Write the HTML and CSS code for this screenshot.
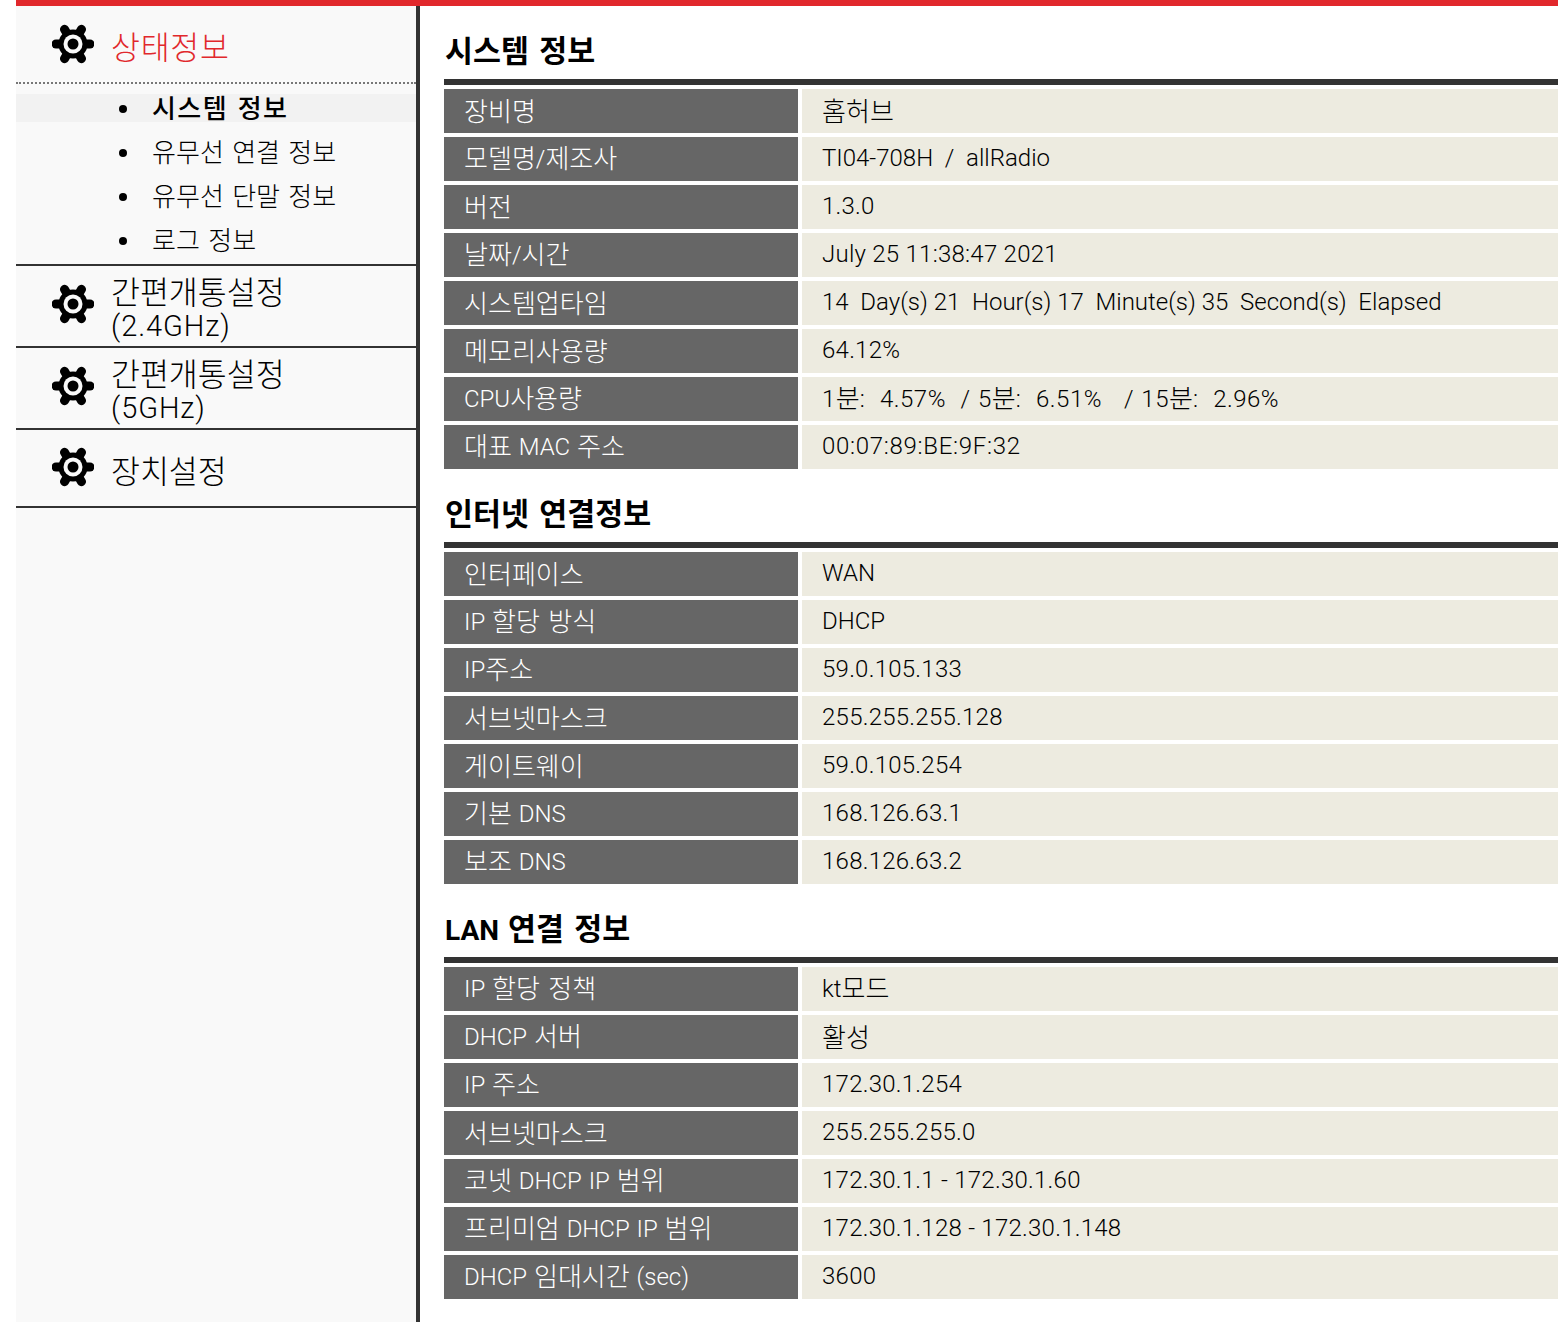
FILE: index.html
```html
<!DOCTYPE html>
<html lang="ko">
<head>
  <meta charset="UTF-8">
  <meta name="viewport" content="width=device-width, initial-scale=1.0">
  <title>상태정보</title>
  <link rel="stylesheet" href="styles.css">
</head>
<body>
<svg class="defs" width="0" height="0">
  <symbol id="gear" viewBox="-21 -21 42 42">
    <g stroke="#000" stroke-width="9" stroke-linecap="round">
      <line x1="0" y1="0" x2="17" y2="0"/>
      <line x1="0" y1="0" x2="-17" y2="0"/>
      <line x1="0" y1="0" x2="8.5" y2="14.7"/>
      <line x1="0" y1="0" x2="-8.5" y2="14.7"/>
      <line x1="0" y1="0" x2="8.5" y2="-14.7"/>
      <line x1="0" y1="0" x2="-8.5" y2="-14.7"/>
    </g>
    <circle r="14.5" fill="#000"/>
    <circle r="9.5" fill="#f9f9f9"/>
    <circle r="5.5" fill="#000"/>
  </symbol>
</svg>
<div class="topbar"></div>
<div class="page">
  <nav class="sidebar">
    <div class="menu menu-open">
      <svg class="gear"><use href="#gear"/></svg>
      <span class="menu-title"><span class="ko">상태정보</span></span>
    </div>
    <ul class="submenu">
      <li class="active"><span class="ko">시스템 정보</span></li>
      <li><span class="ko">유무선 연결 정보</span></li>
      <li><span class="ko">유무선 단말 정보</span></li>
      <li><span class="ko">로그 정보</span></li>
    </ul>
    <div class="menu menu-two">
      <svg class="gear"><use href="#gear"/></svg>
      <span class="menu-title"><span class="ko">간편개통설정</span><br>(2.4GHz)</span>
    </div>
    <div class="menu menu-two">
      <svg class="gear"><use href="#gear"/></svg>
      <span class="menu-title"><span class="ko">간편개통설정</span><br>(5GHz)</span>
    </div>
    <div class="menu menu-last">
      <svg class="gear"><use href="#gear"/></svg>
      <span class="menu-title"><span class="ko">장치설정</span></span>
    </div>
  </nav>

  <main class="content">
    <h2><span class="ko">시스템 정보</span></h2>
    <div class="info">
      <div class="key"><span class="ko">장비명</span></div><div class="val"><span class="ko">홈허브</span></div>
      <div class="key"><span><span class="ko">모델명</span>/<span class="ko">제조사</span></span></div><div class="val">TI04-708H  /  allRadio</div>
      <div class="key"><span class="ko">버전</span></div><div class="val num">1.3.0</div>
      <div class="key"><span><span class="ko">날짜</span>/<span class="ko">시간</span></span></div><div class="val num">July 25 11:38:47 2021</div>
      <div class="key"><span class="ko">시스템업타임</span></div><div class="val">14  Day(s) 21  Hour(s) 17  Minute(s) 35  Second(s)  Elapsed</div>
      <div class="key"><span class="ko">메모리사용량</span></div><div class="val num">64.12%</div>
      <div class="key"><span>CPU<span class="ko">사용량</span></span></div><div class="val cpu"><span>1<span class="ko">분</span>:  4.57%  / 5<span class="ko">분</span>:  6.51%   / 15<span class="ko">분</span>:  2.96%</span></div>
      <div class="key"><span><span class="ko">대표</span> MAC <span class="ko">주소</span></span></div><div class="val mac">00:07:89:BE:9F:32</div>
    </div>

    <h2><span class="ko">인터넷 연결정보</span></h2>
    <div class="info">
      <div class="key"><span class="ko">인터페이스</span></div><div class="val">WAN</div>
      <div class="key"><span>IP <span class="ko">할당 방식</span></span></div><div class="val">DHCP</div>
      <div class="key"><span>IP<span class="ko">주소</span></span></div><div class="val num">59.0.105.133</div>
      <div class="key"><span class="ko">서브넷마스크</span></div><div class="val num">255.255.255.128</div>
      <div class="key"><span class="ko">게이트웨이</span></div><div class="val num">59.0.105.254</div>
      <div class="key"><span><span class="ko">기본</span> DNS</span></div><div class="val num">168.126.63.1</div>
      <div class="key"><span><span class="ko">보조</span> DNS</span></div><div class="val num">168.126.63.2</div>
    </div>

    <h2>LAN <span class="ko">연결 정보</span></h2>
    <div class="info">
      <div class="key"><span>IP <span class="ko">할당 정책</span></span></div><div class="val"><span>kt<span class="ko">모드</span></span></div>
      <div class="key"><span>DHCP <span class="ko">서버</span></span></div><div class="val"><span class="ko">활성</span></div>
      <div class="key"><span>IP <span class="ko">주소</span></span></div><div class="val num">172.30.1.254</div>
      <div class="key"><span class="ko">서브넷마스크</span></div><div class="val num">255.255.255.0</div>
      <div class="key"><span><span class="ko">코넷</span> DHCP IP <span class="ko">범위</span></span></div><div class="val num">172.30.1.1 - 172.30.1.60</div>
      <div class="key"><span><span class="ko">프리미엄</span> DHCP IP <span class="ko">범위</span></span></div><div class="val num">172.30.1.128 - 172.30.1.148</div>
      <div class="key"><span>DHCP <span class="ko">임대시간</span> (sec)</span></div><div class="val num">3600</div>
    </div>
  </main>
</div>
</body>
</html>
```
FILE: styles.css
```css
html, body {
  height: 100%;
}
body {
  margin: 0 0 0 16px;
  background-color: #fff;
  color: #000;
  font-family: Roboto, "Liberation Sans", "Noto Sans CJK KR", sans-serif;
  font-size: 24px;
  font-weight: 300;
  overflow: hidden;
}
.defs {
  display: block;
  height: 0;
}
.ko {
  font-family: "Noto Sans CJK KR", sans-serif;
  font-size: 1.085em;
  font-weight: 300;
  line-height: 1;
  letter-spacing: 0;
}
.topbar {
  height: 6px;
  background-color: #e1282c;
}
.page {
  display: flex;
  height: calc(100% - 6px);
}

/* left menu */
.sidebar {
  width: 400px;
  flex: none;
  background-color: #f9f9f9;
  border-right: 4px solid #333;
}
.menu {
  display: flex;
  align-items: center;
  gap: 17px;
  padding-left: 36px;
  height: 80px;
  border-bottom: 2px solid #333;
  font-size: 29px;
  line-height: 34px;
  letter-spacing: 0.9px;
}
.menu .ko {
  vertical-align: -2px;
}
.menu-open {
  height: 76px;
  border-bottom: 2px dotted #777;
}
.menu-open .menu-title {
  color: #e1282c;
}
.menu-open .ko {
  letter-spacing: 0.7px;
}
.menu-last {
  height: 76px;
}
.menu-title {
  margin-top: 5px;
}
.gear {
  width: 42px;
  height: 42px;
  flex: none;
  margin-top: -5px;
  filter: blur(0.4px);
}
.menu-open .gear {
  margin-top: -1px;
}
.menu-last .gear {
  margin-top: -2px;
}
.submenu {
  list-style: none;
  margin: 0;
  padding: 10px 0;
  border-bottom: 2px solid #333;
  display: flex;
  flex-direction: column;
  gap: 16px;
}
.submenu li {
  display: flex;
  align-items: center;
  height: 28px;
  padding: 0 0 2px 103px;
  box-sizing: border-box;
  word-spacing: 1px;
}
.submenu li::before {
  content: '';
  width: 8px;
  height: 8px;
  margin: 3px 25px 0 0;
  border-radius: 50%;
  background-color: #000;
}
.submenu .active {
  background-color: #f2f2f2;
}
.submenu .active .ko {
  font-weight: 500;
  letter-spacing: 1.4px;
}

/* right tables */
.content {
  flex: 1;
  padding-left: 24px;
}
h2 {
  margin: 0;
  height: 73px;
  padding-left: 1px;
  box-sizing: border-box;
  padding-top: 28px;
  font-size: 28px;
  line-height: 36px;
  font-weight: bold;
  word-spacing: 2px;
}
h2 .ko {
  font-weight: 700;
}
.info {
  display: grid;
  grid-template-columns: 354px 1fr;
  grid-auto-rows: 44px;
  gap: 4px;
  padding-top: 4px;
  border-top: 6px solid #333;
}
.key, .val {
  display: flex;
  align-items: center;
  white-space: pre;
  padding-bottom: 2px;
  box-sizing: border-box;
}
.key > span > .ko, .val > span > .ko {
  vertical-align: -1px;
}
.key {
  padding-left: 20px;
  background-color: #666;
  color: #fff;
  word-spacing: 1px;
}
.val {
  padding-left: 20px;
  background-color: #edebe0;
}
.num {
  letter-spacing: 0.25px;
}
.cpu {
  letter-spacing: 0.5px;
  word-spacing: 1px;
}
.mac {
  letter-spacing: 0.7px;
}
```
